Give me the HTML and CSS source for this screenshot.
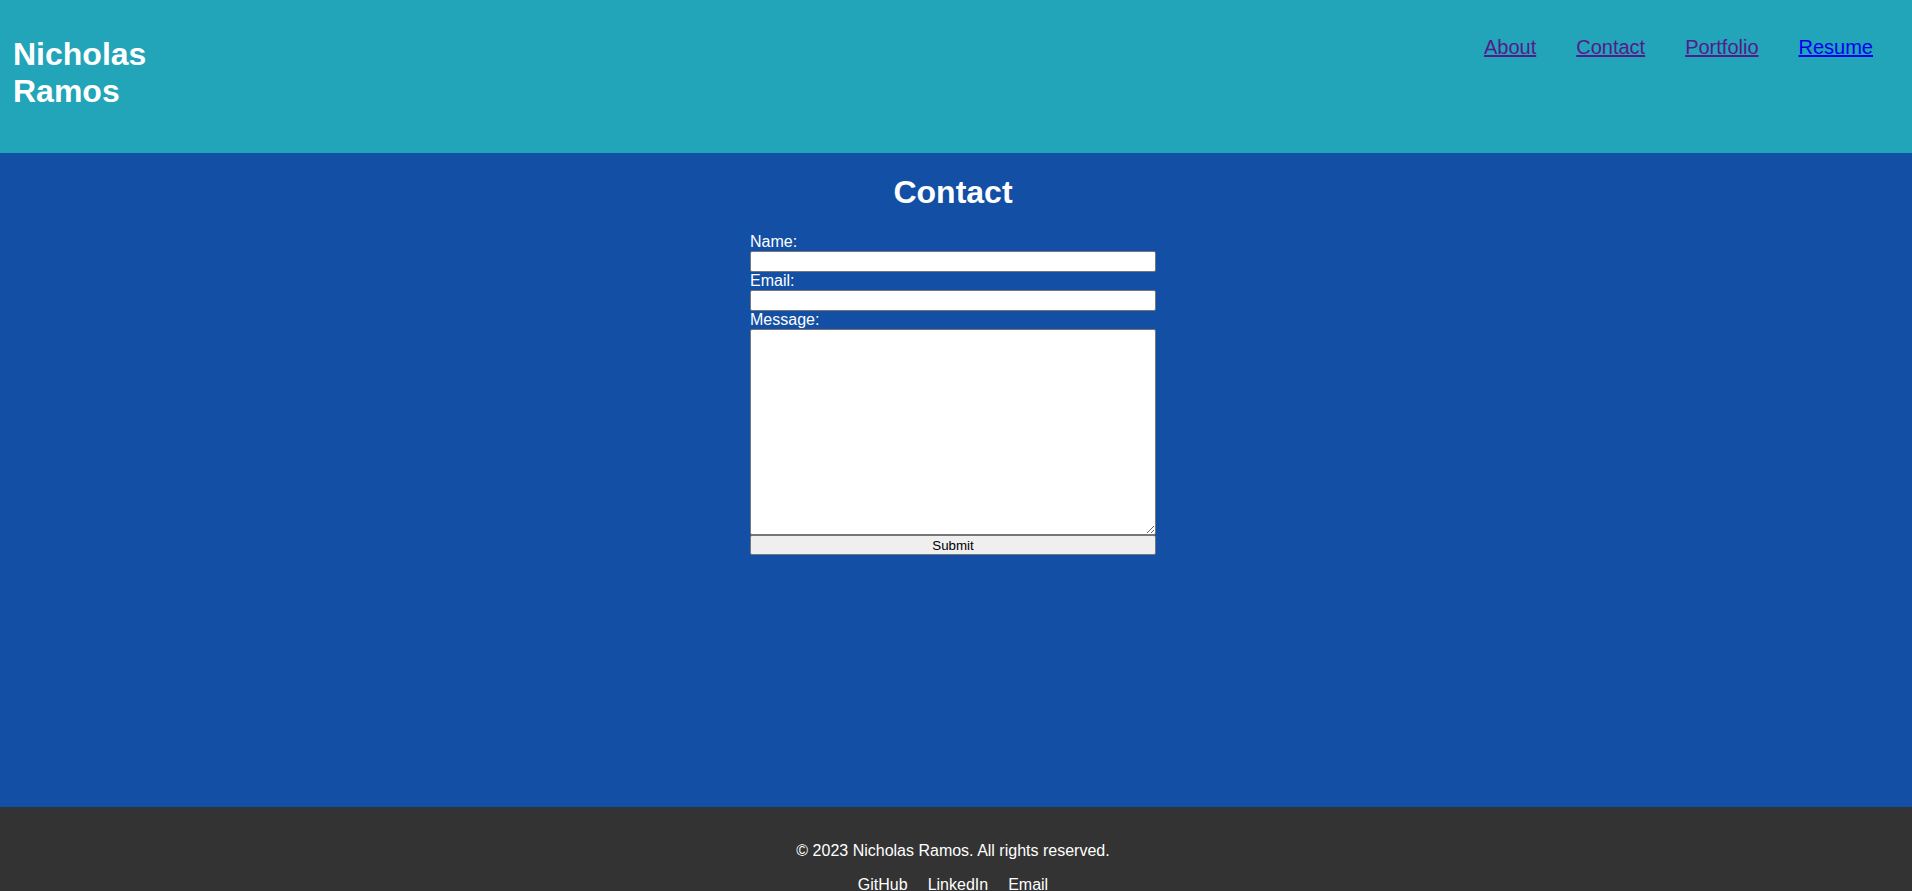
FILE: index.html
```html
<!DOCTYPE html>
<html lang="en">
<head>
<meta charset="utf-8">
<title>Contact - Nicholas Ramos</title>
<link rel="stylesheet" href="styles.css">
</head>
<body>
<header class="site-header">
  <h1 class="logo">Nicholas Ramos</h1>
  <nav class="nav">
    <a class="nav-link visited" href="#about">About</a>
    <a class="nav-link visited" href="#contact">Contact</a>
    <a class="nav-link visited" href="#portfolio">Portfolio</a>
    <a class="nav-link" href="#resume">Resume</a>
  </nav>
</header>
<main class="main">
  <h1 class="page-title">Contact</h1>
  <form class="contact-form">
    <label class="field-label" for="name">Name:</label>
    <input class="field-input" id="name" type="text">
    <label class="field-label" for="email">Email:</label>
    <input class="field-input" id="email" type="email">
    <label class="field-label" for="message">Message:</label>
    <textarea class="field-textarea" id="message"></textarea>
    <button class="submit-btn" type="submit">Submit</button>
  </form>
</main>
<footer class="site-footer">
  <p class="copyright">© 2023 Nicholas Ramos. All rights reserved.</p>
  <div class="footer-links">
    <a class="footer-link" href="#github">GitHub</a>
    <a class="footer-link" href="#linkedin">LinkedIn</a>
    <a class="footer-link" href="#email">Email</a>
  </div>
</footer>
</body>
</html>
```
FILE: styles.css
```css
* { box-sizing: border-box; }

body {
  margin: 0;
  font-family: "Liberation Sans", Arial, sans-serif;
  font-size: 16px;
  color: #fff;
}

.site-header {
  display: flex;
  justify-content: space-between;
  align-items: flex-start;
  height: 153px;
  padding: 15px 39px 0 13px;
  background: #22a4b9;
}

.logo {
  margin: 21px 0 0;
  max-width: 200px;
  font-size: 32px;
  font-weight: bold;
  line-height: normal;
  color: #fff;
}

.nav {
  display: flex;
  gap: 40px;
  margin-top: 21px;
}

.nav-link {
  font-size: 20px;
  color: #0000ee;
  text-decoration: underline;
}

.nav-link.visited { color: #551a8b; }

.main {
  display: flex;
  flex-direction: column;
  align-items: center;
  min-height: 654px;
  padding: 21px 6px 0 0;
  background: #124fa5;
}

.page-title {
  margin: 0 0 22px;
  font-size: 32px;
  font-weight: bold;
  line-height: normal;
}

.contact-form {
  display: flex;
  flex-direction: column;
  width: 406px;
}

.field-label {
  display: block;
  height: 18px;
  line-height: 18px;
  font-size: 16px;
}

.field-input {
  display: block;
  width: 100%;
  height: 21px;
  margin: 0;
  padding: 1px 2px;
  border: 1px solid #767676;
  border-radius: 2px;
  background: #fff;
  font: 13.33px "Liberation Sans", Arial, sans-serif;
}

.field-textarea {
  display: block;
  width: 100%;
  height: 206px;
  margin: 0;
  padding: 2px;
  border: 1px solid #767676;
  border-radius: 2px;
  background: #fff;
  resize: vertical;
  font: 13.33px "Liberation Mono", monospace;
}

.submit-btn {
  display: block;
  width: 100%;
  height: 20px;
  margin: 0;
  padding: 0 6px;
  border: 1px solid #767676;
  border-radius: 2px;
  background: #efefef;
  color: #000;
  font: 13.33px "Liberation Sans", Arial, sans-serif;
}

.site-footer {
  padding: 19px 6px 20px 0;
  background: #333;
  text-align: center;
}

.copyright {
  margin: 16px 0;
  line-height: 18px;
}

.footer-links {
  display: flex;
  justify-content: center;
  gap: 20px;
  line-height: 18px;
}

.footer-link {
  color: #fff;
  text-decoration: none;
}
```
